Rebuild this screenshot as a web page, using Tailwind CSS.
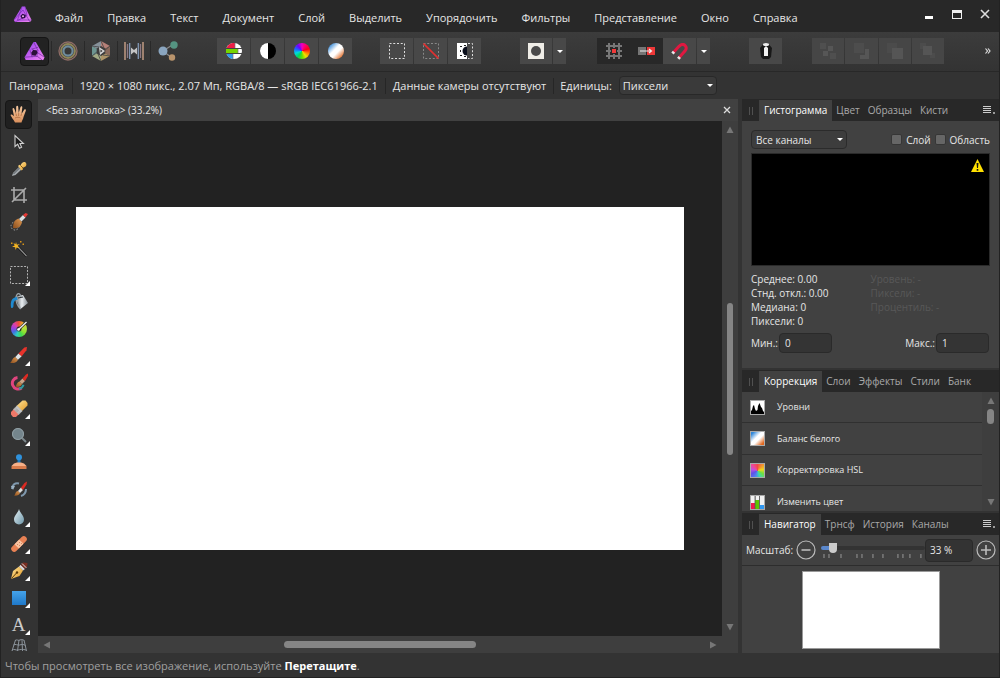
<!DOCTYPE html>
<html lang="ru">
<head>
    <meta charset="UTF-8">
    <meta name="viewport" content="width=device-width, initial-scale=1.0">
    <title>Без заголовка (33.2%)</title>
    <script src="https://cdn.jsdelivr.net/npm/@tailwindcss/browser@4"></script>
</head>
<body class="h-screen flex flex-col overflow-hidden border-x border-[#222] bg-[#333] text-[11px] leading-4 text-[#e6e6e6] font-['Open_Sans','Noto_Sans',sans-serif]">

    <!-- Shared gradients -->
    <svg class="absolute size-0" aria-hidden="true">
        <defs>
            <linearGradient id="purple" x1="0" y1="0" x2="1" y2="1"><stop offset="0" stop-color="#8a4ae8"/><stop offset=".5" stop-color="#c860f2"/><stop offset="1" stop-color="#f08af0"/></linearGradient>
            <linearGradient id="white-balance" x1="0" y1="0" x2="1" y2="1"><stop offset=".1" stop-color="#2f86d8"/><stop offset=".42" stop-color="#fff"/><stop offset=".58" stop-color="#fff"/><stop offset=".9" stop-color="#e0651c"/></linearGradient>
            <linearGradient id="wood" x1="1" y1="0" x2="0" y2="1"><stop offset="0" stop-color="#e09a52"/><stop offset="1" stop-color="#8a4d1d"/></linearGradient>
            <linearGradient id="steel" x1="0" y1="0" x2="1" y2="0"><stop offset="0" stop-color="#6e767c"/><stop offset=".5" stop-color="#e8edf0"/><stop offset="1" stop-color="#7f888f"/></linearGradient>
            <linearGradient id="drop" x1="0" y1="0" x2="1" y2="1"><stop offset="0" stop-color="#e6f1f6"/><stop offset="1" stop-color="#6d96a8"/></linearGradient>
            <linearGradient id="blue" x1="0" y1="0" x2="0" y2="1"><stop offset="0" stop-color="#45a3ea"/><stop offset="1" stop-color="#1f78c8"/></linearGradient>
            <linearGradient id="skin" x1="0" y1="0" x2="0" y2="1"><stop offset="0" stop-color="#f6c9a0"/><stop offset="1" stop-color="#d98f5c"/></linearGradient>
            <linearGradient id="gold" x1="0" y1="0" x2="1" y2="1"><stop offset="0" stop-color="#ffe49a"/><stop offset="1" stop-color="#e29a25"/></linearGradient>
        </defs>
    </svg>

    <!-- Menu bar -->
    <header class="flex h-8 shrink-0 items-start bg-[#282828] pl-3">
        <svg class="mt-1 size-5" viewBox="0 0 20 20" aria-hidden="true">
            <path d="M9 2.5h3L18.5 16 17 18H2L.8 16z" fill="url(#purple)"/>
            <path d="M9 2.5 4.5 16H18.5M12 2.5l2 9L2 18M1 15.8 10 6l7 12" fill="none" stroke="#6a25a8" stroke-width=".6"/>
            <path d="m9.6 9.7 3.2 1.4-.6 3-3.3.6-1.6-2.6z" fill="#2a0d45"/>
            <circle cx="10" cy="12.3" r="1" fill="#f3b5f5"/>
        </svg>
        <nav class="ml-[22px] flex gap-6 pt-[10px]">
            <a href="#">Файл</a>
            <a href="#">Правка</a>
            <a href="#">Текст</a>
            <a href="#">Документ</a>
            <a href="#">Слой</a>
            <a href="#">Выделить</a>
            <a href="#">Упорядочить</a>
            <a href="#">Фильтры</a>
            <a href="#">Представление</a>
            <a href="#">Окно</a>
            <a href="#">Справка</a>
        </nav>
        <div class="ml-auto flex gap-4 pt-2 pr-2">
            <button class="grid size-3 place-items-center" aria-label="Свернуть"><svg class="size-3" viewBox="0 0 12 12"><path d="M2 8h8v3H2z" fill="#fff"/></svg></button>
            <button class="grid size-3 place-items-center" aria-label="Развернуть"><svg class="size-3" viewBox="0 0 12 12"><path d="M1 2h10v9H1zM2 5v5h8V5z" fill="#f0f0f0" fill-rule="evenodd"/></svg></button>
            <button class="grid size-3 place-items-center" aria-label="Закрыть"><svg class="size-3" viewBox="0 0 12 12"><path d="m2 2 8 8M10 2l-8 8" stroke="#ddd" stroke-width="1.6"/></svg></button>
        </div>
    </header>

    <!-- Toolbar -->
    <div class="flex h-10 shrink-0 items-center border-b border-[#282828] bg-linear-to-b from-[#3c3c3c] to-[#333] pb-px pl-[19px]">
        <button class="grid size-[29px] place-items-center rounded-sm border border-[#151515] bg-[#222]" aria-label="Photo Persona">
            <svg class="size-[21px]" viewBox="0 0 22 22">
                <path d="M10 1h2.4L21.5 17l-1.3 3H1.8L.6 17z" fill="url(#purple)"/>
                <path d="M10 1 14.6 10M21.5 17 8 8.2M.6 17l13-1M6 8.7 8.5 17M14.8 6.6 8 8.5M13.8 16l5.4 4M14.6 9.5l-1.2 7" fill="none" stroke="#6d2a9e" stroke-width=".7"/>
                <path d="m9.5 9.500 3.800.300.800 2.900-2 2.800-3.800-.600-.700-2.700z" fill="#2b1038"/>
            </svg>
        </button>
        <div class="ml-[2px] flex divide-x divide-[#292929] border-l border-[#292929]">
            <button class="grid h-5 w-[33px] place-items-center" aria-label="Liquify Persona">
                <svg class="size-5" viewBox="0 0 20 20" fill="none"><circle cx="10" cy="10" r="9" stroke="#8f6c66" stroke-width="1.3"/><circle cx="10" cy="10" r="7" stroke="#8f8558" stroke-width="1.8"/><circle cx="10" cy="10" r="4.6" stroke="#6f8c9c" stroke-width="2.2"/></svg>
            </button>
            <button class="grid h-5 w-[33px] place-items-center" aria-label="Develop Persona">
                <svg class="size-5" viewBox="0 0 20 20"><path d="m10 0 9 5-9 5z" fill="#b58078"/><path d="M19 5v10l-9-5z" fill="#8a6a5c"/><path d="m19 15-9 5V10z" fill="#ad9468"/><path d="m10 20-9-5 9-5z" fill="#a2aa84"/><path d="M1 15V5l9 5z" fill="#6d9591"/><path d="m1 5 9-5v10z" fill="#86919a"/><path d="m10 0 3 7M19 5l-6 5M19 15l-7-1M10 20l-3-7M1 15l6-5M1 5l7 1" stroke="#444" stroke-width=".800"/><path d="m10 5 4.300 2.500v5L10 15l-4.300-2.500v-5z" fill="#3d3d3d"/><path d="m8 6 6 4-5 4z" fill="#d6d6d6"/><path d="m9.500 8.500 2 1.500-2 1.500z" fill="#333"/></svg>
            </button>
            <button class="grid h-5 w-[33px] place-items-center" aria-label="Tone Mapping Persona">
                <svg class="size-5" viewBox="0 0 20 20"><path d="M1 1v18M19 1v18" stroke="#b9957f" stroke-width="1.6"/><path d="M3.500 3v14M16.500 3v14" stroke="#8c7883" stroke-width="1.300"/><path d="M5.700 2v16M14.300 2v16" stroke="#8298b5" stroke-width="1.300"/><path d="m7 6.500 3 2.500 3-2.500v7L10 11l-3 2.500z" fill="#c4c4c4"/></svg>
            </button>
            <button class="grid h-5 w-[33px] place-items-center" aria-label="Export Persona">
                <svg class="size-5" viewBox="0 0 20 20"><path d="m5 10 10-6.500M5 10l9 7" stroke="#888" stroke-width="1.300"/><circle cx="5" cy="10" r="4.500" fill="#8aa5bf"/><circle cx="16" cy="4" r="3.700" fill="#559482"/><circle cx="14" cy="16.500" r="3.200" fill="#b9946c"/></svg>
            </button>
        </div>

        <!-- Auto adjustments -->
        <div class="ml-[33px] flex gap-px">
            <button class="grid h-[26px] w-[33px] place-items-center bg-[#484848]" aria-label="Автоуровни">
                <svg class="size-4" viewBox="0 0 16 16"><circle cx="8" cy="8" r="8" fill="#fff"/><path d="M1.100 4A8 8 0 0 1 9 0v5H.600z" fill="#ee1d45"/><path d="M0 6h12v4H0z" fill="#76d500"/><path d="M.600 11H7v5A8 8 0 0 1 .600 11z" fill="#2f9be8"/><path d="M0 5.500h16M0 10.500h16" stroke="#444" stroke-width="1"/><path d="M9 0v5M12 6v4M7 11v5" stroke="#777" stroke-width=".700"/></svg>
            </button>
            <button class="grid h-[26px] w-[33px] place-items-center bg-[#484848]" aria-label="Автоконтраст">
                <svg class="size-4" viewBox="0 0 16 16"><circle cx="8" cy="8" r="8" fill="#000"/><path d="M8 0a8 8 0 0 0 0 16z" fill="#fff"/></svg>
            </button>
            <button class="grid h-[26px] w-[33px] place-items-center bg-[#484848]" aria-label="Автоцвета">
                <span class="size-4 rounded-full bg-[conic-gradient(#f000c0,#ff0060,#ff0018,#ff7a00,#f0e000,#60e000,#00d860,#00d8e0,#2060ff,#7000ff,#f000c0)]"></span>
            </button>
            <button class="grid h-[26px] w-[33px] place-items-center bg-[#484848]" aria-label="Автобаланс белого">
                <svg class="size-4" viewBox="0 0 16 16"><circle cx="8" cy="8" r="8" fill="url(#white-balance)"/></svg>
            </button>
        </div>

        <!-- Selection -->
        <div class="ml-[28px] flex gap-px">
            <button class="grid h-[26px] w-[33px] place-items-center bg-[#484848]" aria-label="Выделить все">
                <svg class="size-4" viewBox="0 0 16 16"><path d="M.500.500h15v15H.500z" fill="none" stroke="#ddd" stroke-dasharray="2 1.750"/></svg>
            </button>
            <button class="grid h-[26px] w-[33px] place-items-center bg-[#484848]" aria-label="Отменить выделение">
                <svg class="size-4" viewBox="0 0 16 16"><path d="M.500.500h15v15H.500z" fill="none" stroke="#888" stroke-dasharray="2 1.750"/><path d="m.500.500 15 15" stroke="#e03030" stroke-width="1.600"/></svg>
            </button>
            <button class="grid h-[26px] w-[33px] place-items-center bg-[#484848]" aria-label="Инвертировать выделение">
                <svg class="size-4" viewBox="0 0 16 16"><path d="M0 0h10v16H0z" fill="#fff"/><path d="M10 3.500a4.500 4.500 0 0 0 0 9z" fill="#0b0f1c"/><path d="M3 3h2v1H3zm0 4h1v2H3zm0 5h2v1H3zm4-10h2v1H7zm0 11h2v1H7z" fill="#222"/><path d="M11 .500h4.500v15H11" fill="none" stroke="#ddd" stroke-dasharray="2 1.750"/></svg>
            </button>
        </div>

        <!-- Quick mask -->
        <div class="ml-[39px] flex gap-px">
            <button class="grid h-[26px] w-8 place-items-center bg-[#484848]" aria-label="Быстрая маска">
                <svg class="size-4" viewBox="0 0 16 16"><path d="M0 0h16v16H0z" fill="#efede7"/><circle cx="8" cy="8" r="5" fill="#4a4a4a"/></svg>
            </button>
            <button class="grid h-[26px] w-[13px] place-items-center bg-[#484848]" aria-label="Параметры маски">
                <svg class="h-[3px] w-[6px]" viewBox="0 0 6 3"><path d="M0 0h6L3 3z" fill="#fff"/></svg>
            </button>
        </div>

        <!-- Snapping -->
        <div class="ml-[31px] flex">
            <button class="grid h-[26px] w-[33px] place-items-center bg-[#282828]" aria-label="Сетка">
                <svg class="size-4" viewBox="0 0 16 16"><path d="M3 0v16M8 0v16M13 0v16M0 3h16M0 8h16M0 13h16" stroke="#777" stroke-width="2"/><path d="M5 5h6v6H5z" fill="#282828"/><path d="M6 6h4v4H6z" fill="#f03a3a"/></svg>
            </button>
            <button class="grid h-[26px] w-[33px] place-items-center bg-[#282828]" aria-label="Перемещение по пикселям">
                <svg class="h-4 w-[17px]" viewBox="0 0 17 16"><path d="M0 4h8v8H0z" fill="#757575"/><path d="M9 4h8v8H9z" fill="#ee3838"/><path d="M2 8h11M11 6l2.500 2-2.500 2" fill="none" stroke="#eee" stroke-width="1.200"/></svg>
            </button>
            <button class="grid h-[26px] w-[33px] place-items-center bg-[#484848]" aria-label="Прилипание">
                <svg class="size-[17px]" viewBox="0 0 18 18" fill="none"><path d="m2.500 10 6-6.500c2.700-2.500 5-2.300 6.400-.900 1.800 1.800 1.400 4-.200 6L8.500 15.500" stroke="#e01840" stroke-width="3.200"/><path d="m1.500 11.200 1.700-1.900M7.600 16.600l1.700-1.900" stroke="#e8e8e8" stroke-width="3.200"/></svg>
            </button>
            <button class="ml-px grid h-[26px] w-[13px] place-items-center bg-[#484848]" aria-label="Параметры прилипания">
                <svg class="h-[3px] w-[6px]" viewBox="0 0 6 3"><path d="M0 0h6L3 3z" fill="#fff"/></svg>
            </button>
        </div>

        <button class="ml-[39px] grid h-[26px] w-[33px] place-items-center bg-[#484848]" aria-label="Помощник">
            <svg class="size-4" viewBox="0 0 16 16"><path d="M2 5 5 1.500h6L14 5l-1 9-2 2H5l-2-2z" fill="#181818"/><ellipse cx="8" cy="1.500" rx="3" ry="1.500" fill="#eee"/><path d="m8 3 2 2v8H6V5z" fill="#f2f2f2"/></svg>
        </button>

        <!-- Arrange -->
        <div class="ml-[30px] flex gap-px">
            <button class="grid h-[26px] w-8 place-items-center bg-[#464646]" aria-label="На задний план" disabled>
                <svg class="size-4" viewBox="0 0 16 16"><path d="M0 0h6v6H0zM10 10h6v6h-6z" fill="#4f4f4f"/><path d="M8 3h5v5H8zM3 8h5v5H3z" fill="#565656"/></svg>
            </button>
            <button class="grid h-[26px] w-[33px] place-items-center bg-[#464646]" aria-label="Назад" disabled>
                <svg class="size-4" viewBox="0 0 16 16"><path d="M0 0h10v10H0z" fill="#4d4d4d"/><path d="M11 6h4v10H6v-4h5z" fill="#565656"/></svg>
            </button>
            <button class="grid h-[26px] w-8 place-items-center bg-[#464646]" aria-label="Вперед" disabled>
                <svg class="size-4" viewBox="0 0 16 16"><path d="M0 0h10v10H0z" fill="#4b4b4b"/><path d="M5 5h11v11H5z" fill="#555"/></svg>
            </button>
            <button class="grid h-[26px] w-8 place-items-center bg-[#464646]" aria-label="На передний план" disabled>
                <svg class="size-4" viewBox="0 0 16 16"><path d="M0 0h6v6H0zM10 10h5v5h-5z" fill="#4c4c4c"/><path d="M3 3h9v9H3z" fill="#555"/></svg>
            </button>
        </div>
        <button class="mr-2 ml-auto" aria-label="Еще">
            <svg class="h-[6px] w-[6px]" viewBox="0 0 6 6"><path d="m.500.500 2 2.500-2 2.500m2.500-5L5 3 3 5.500" fill="none" stroke="#ddd" stroke-width="1.200"/></svg>
        </button>
    </div>

    <!-- Context bar -->
    <div class="flex h-[27px] shrink-0 items-center divide-x divide-[#262626]">
        <span class="pr-2 pl-2">Панорама</span>
        <span class="px-[7px]">1920 × 1080 пикс., 2.07 Мп, RGBA/8 — sRGB IEC61966-2.1</span>
        <span class="px-[7px]">Данные камеры отсутствуют</span>
        <div class="flex items-center pl-[6px]">
            <label for="units">Единицы:</label>
            <div class="relative ml-[7px]">
                <select id="units" class="block h-[19px] w-[98px] appearance-none rounded-sm border border-[#282828] bg-[#3a3a3a] pl-[3px] leading-4">
                    <option>Пиксели</option>
                </select>
                <svg class="pointer-events-none absolute top-2 right-1 h-[3px] w-[6px]" viewBox="0 0 6 3"><path d="M0 0h6L3 3z" fill="#fff"/></svg>
            </div>
        </div>
    </div>

    <div class="flex min-h-0 flex-1">
        <!-- Tools -->
        <div class="flex w-[37px] shrink-0 flex-col overflow-hidden pt-px pr-[2px]">
            <div class="flex h-[402px] shrink-0 flex-col">
                <button class="mx-auto grid w-[27px] flex-1 place-items-center rounded-sm border border-[#161616] bg-[#202020]" aria-label="Панорама">
                    <svg class="h-[18px] w-[17px]" viewBox="0 0 17 18"><path d="M5 17.500C3.500 14.500 1.200 12 .500 10c.500-1 1.800-.600 3.500 1.200L2.500 4c.200-1.300 1.500-1.200 1.900 0L6 8.500 6.200 1.700C6.500.500 8 .500 8.200 1.700l.500 6.300L10.500 2c.600-1.200 1.900-.800 1.800.500L11.500 9l2.700-4.300c1-.900 2-.200 1.600 1L13.500 12c-.300 2-1.500 3.500-2 5.500z" fill="url(#skin)"/><path d="M6 8.500 6.500 11M8.700 8 8.600 11M11.500 9l-.600 2M5 13c2-1 4-1 5.500 0" fill="none" stroke="#a86438" stroke-width=".700"/></svg>
                </button>
                <button class="mx-auto grid w-[27px] flex-1 place-items-center" aria-label="Вид">
                    <svg class="size-4" viewBox="0 0 16 16"><path d="M4 1.500v11l2.700-2.300 1.800 4 2.100-1-1.700-3.700h3.500z" fill="#1c1c1c" stroke="#d0d0d0" stroke-width="1.100"/></svg>
                </button>
                <button class="mx-auto grid w-[27px] flex-1 place-items-center" aria-label="Пипетка">
                    <svg class="size-4" viewBox="0 0 16 16"><path d="m1 15 1-3 6-6 2.500 2.500-6 5.500z" fill="#a4a9ad"/><path d="m2.500 13 6-6" stroke="#4c5358"/><path d="M7 5 8.500 3.800l1 .700C10.500 2 12 .500 14 1c1.800.900 1.800 3.300.500 4.500l-3 1.500.600 1.200L10.500 9.500z" fill="url(#gold)"/><path d="m9.500 4.500 2.500 2.500" stroke="#8a5a10"/></svg>
                </button>
                <button class="mx-auto grid w-[27px] flex-1 place-items-center" aria-label="Обрезка">
                    <svg class="size-4" viewBox="0 0 16 16"><path d="M3 0v13h13M0 3h13v13M1 15 15 1" fill="none" stroke="#aaa" stroke-width="1.600"/></svg>
                </button>
                <button class="mx-auto grid w-[27px] flex-1 place-items-center" aria-label="Кисть выделения">
                    <svg class="h-[18px] w-[18px]" viewBox="0 0 18 18"><circle cx="5" cy="13" r="4" fill="none" stroke="#aaa" stroke-dasharray="1.500 1.500"/><path d="M3 15c0-4 1-8 5.500-9.500l3.500 3.500C11 14 7.500 16 3 15z" fill="url(#wood)"/><path d="m9 6 4-4 2.500 2.500-4 4z" fill="#d8dde0"/><path d="m13 2 2.500-2L18 1l-2.500 3.500z" fill="#e53935"/></svg>
                </button>
                <button class="mx-auto grid w-[27px] flex-1 place-items-center" aria-label="Волшебная палочка">
                    <svg class="size-4" viewBox="0 0 16 16"><path d="m6 5 9.500 10" stroke="#151515" stroke-width="2.600"/><path d="m6 5 9.500 10" stroke="#8d8d8d" stroke-width="1.200"/><path d="m5 1 .800 2.700 3-.700-2.300 2 2.200 2.200-3-.600L4.500 9l-.300-2.800L1 5.700l2.700-1.200L2.500 2l2 1.200z" fill="#f6b521"/><path d="M9 0h1.500v1.500H9zM11.500 2.500H13V4h-1.500zM0 1.500h1.500V3H0z" fill="#d99518"/></svg>
                </button>
                <button class="relative mx-auto grid w-[27px] flex-1 place-items-center" aria-label="Прямоугольное выделение">
                    <svg class="size-[18px]" viewBox="0 0 18 18"><path d="M.500.500h17v17H.500z" fill="none" stroke="#b4b4b4" stroke-dasharray="2 1.400"/></svg>
                    <svg class="absolute right-[2px] bottom-[3px] size-[5px]" viewBox="0 0 4 4"><path d="M4 0v4H0z" fill="#fff"/></svg>
                </button>
                <button class="mx-auto grid w-[27px] flex-1 place-items-center" aria-label="Заливка">
                    <svg class="size-[18px]" viewBox="0 0 18 18"><path d="m6 3.500 7-1.500 5 8-7.500 6z" fill="url(#steel)"/><path d="m6 3.500 4.500 12.500c-3-3-5-7-4.500-12.500zM6 4c1-4 4-5 5 0" fill="none" stroke="#98a1a7" stroke-width="1.200"/><path d="m8 5 5-1" stroke="#30363a" stroke-width="1.200"/><path d="M7 4C2 4.500 0 8 1 14.500c1.500 1.300 2.500 0 2.500-2C3.500 9 4.500 7 7.500 7z" fill="#1f8ad0"/></svg>
                </button>
                <button class="mx-auto grid w-[27px] flex-1 place-items-center" aria-label="Градиент">
                    <span class="grid size-4 place-items-center rounded-full bg-[conic-gradient(#f05030,#e8c030,#b8e040,#90e030,#40d850,#30d0c0,#4070e0,#a040e0,#e040a0,#f05030)]">
                        <svg class="size-4 overflow-visible" viewBox="0 0 16 16"><circle cx="8" cy="8" r="2.500" fill="#333"/><path d="m7.500 8.500 8-7.500" stroke="#222" stroke-width="2.500"/><path d="m7.500 8.500 8-7.500" stroke="#f0f0f0" stroke-width="1.400"/><circle cx="7.500" cy="8.500" r="1.300" fill="#fff"/></svg>
                    </span>
                </button>
                <button class="relative mx-auto grid w-[27px] flex-1 place-items-center" aria-label="Кисть">
                    <svg class="size-[17px]" viewBox="0 0 16 16"><path d="M0 15c2-.500 1.500-4.500 5-5.500L7.500 12c-1 3-4.500 3.500-7.500 3z" fill="url(#wood)"/><path d="M5 9.500 8 6l3 2.700-3.500 3.300z" fill="#dfe4e6"/><path d="M8 6 13.500.500 16 0l-.500 3L11 8.700z" fill="#e8332b"/></svg>
                    <svg class="absolute right-[2px] bottom-[3px] size-[5px]" viewBox="0 0 4 4"><path d="M4 0v4H0z" fill="#fff"/></svg>
                </button>
                <button class="mx-auto grid w-[27px] flex-1 place-items-center" aria-label="Замена цвета">
                    <svg class="size-[18px]" viewBox="0 0 18 18"><path d="M7.500 4.500a5.800 5.800 0 1 0 4 10.500" fill="none" stroke="#e0457e" stroke-width="3"/><path d="M9 15.700a5.500 5.500 0 0 0 4.500-4" fill="none" stroke="#2f9aa0" stroke-width="2"/><path d="M5 13.500c2-.500 1-4 4.500-5L12 11c-1 2.500-4 3.500-7 2.500z" fill="url(#wood)"/><path d="m9.500 8.500 3-3L15 8l-3 3z" fill="#c9a389"/><path d="M12.500 5.500 16 1.500l2-1V3l-3 5z" fill="#dc2a22"/></svg>
                </button>
                <button class="relative mx-auto grid w-[27px] flex-1 place-items-center" aria-label="Ластик">
                    <svg class="size-[18px]" viewBox="0 0 18 18"><path d="m6.500 6 6-5.500h3L17.500 3v2.500L12 11z" fill="url(#gold)"/><path d="m3 9.500 4-4 5.500 5.500-4 4z" fill="#c4c4c4"/><path d="m5 7.500 5.500 5.500M4 8.500 9.500 14" stroke="#6b6b6b" stroke-width=".800" stroke-dasharray="1 1"/><path d="m1 12 2.500-2.500 5 5L6 17H3l-2-2.500z" fill="#ee7868"/></svg>
                    <svg class="absolute right-[2px] bottom-[3px] size-[5px]" viewBox="0 0 4 4"><path d="M4 0v4H0z" fill="#fff"/></svg>
                </button>
                <button class="relative mx-auto grid w-[27px] flex-1 place-items-center" aria-label="Осветлитель">
                    <svg class="size-4" viewBox="0 0 16 16"><path d="m10 10 5 5" stroke="#7d888d" stroke-width="2"/><circle cx="7" cy="7" r="6" fill="#74858c"/><circle cx="7" cy="7" r="5.500" fill="none" stroke="#92a0a5"/></svg>
                    <svg class="absolute right-[2px] bottom-[3px] size-[5px]" viewBox="0 0 4 4"><path d="M4 0v4H0z" fill="#fff"/></svg>
                </button>
                <button class="mx-auto grid w-[27px] flex-1 place-items-center" aria-label="Клонирование">
                    <svg class="size-4" viewBox="0 0 16 16"><path d="M6.500 4h3v6h-3z" fill="#1b78bd"/><circle cx="8" cy="3.200" r="3" fill="#2f92dc"/><path d="m3 9.500 3-1h4l3 1 2.500 2.500H.500z" fill="#f7b088"/><path d="M.500 12h15v3H.500z" fill="#d87c4c"/></svg>
                </button>
                <button class="mx-auto grid w-[27px] flex-1 place-items-center" aria-label="Кисть истории">
                    <svg class="size-4" viewBox="0 0 16 16"><path d="M1 8C1 4 4 1.500 8 2.500M15 8c0 4-2 6-5 7" fill="none" stroke="#7f98ad" stroke-width="2"/><path d="M0 5h4L2 9z" fill="#9db3c4"/><path d="M3 14.500c1.500-.500 1-4 4-4.500l2 2c-1 2.500-3.500 3-6 2.500z" fill="url(#wood)"/><path d="m7 10 3-3.500L12 9l-3 3z" fill="#ddd"/><path d="M10 6.500 13.500 2 16 .500 15.500 3.500 12 9z" fill="#dc2a22"/></svg>
                </button>
            </div>
            <div class="mt-px flex flex-col">
                <button class="relative mx-auto grid h-[27px] w-[27px] place-items-center" aria-label="Размытие">
                    <svg class="size-4" viewBox="0 0 16 16"><path d="M8 0c1 4 5 6.500 5 10.500a5 5 0 0 1-10 0C3 6.500 7 4 8 0z" fill="url(#drop)"/></svg>
                    <svg class="absolute right-[2px] bottom-[3px] size-[5px]" viewBox="0 0 4 4"><path d="M4 0v4H0z" fill="#fff"/></svg>
                </button>
                <button class="relative mx-auto grid h-[27px] w-[27px] place-items-center" aria-label="Восстановление">
                    <svg class="size-4" viewBox="0 0 16 16"><path d="m3.200 12.800 9.600-9.600" stroke="#e88154" stroke-width="6" stroke-linecap="round"/><path d="m3.500 8.200 4.700-4.700 4.300 4.300-4.700 4.700z" fill="#f8c3a2"/><path d="M6 8h1v1H6zM8 6h1v1H8zM8 9h1v1H8zM10 7h1v1h-1z" fill="#d4855d"/></svg>
                    <svg class="absolute right-[2px] bottom-[3px] size-[5px]" viewBox="0 0 4 4"><path d="M4 0v4H0z" fill="#fff"/></svg>
                </button>
                <button class="relative mx-auto grid h-[27px] w-[27px] place-items-center" aria-label="Перо">
                    <svg class="size-[18px]" viewBox="0 0 18 18"><path d="M1 17 3 9l6-4.500 4 4L9.500 14z" fill="url(#gold)"/><path d="m1.500 16.500 5-5.500" stroke="#5a3b0b"/><circle cx="7" cy="10.500" r="1.200" fill="#5a3b0b"/><path d="m9 4.500 1.700-1.800L15 7l-2 1.500z" fill="#d9d9d9"/><path d="M10.700 2.700 13 .500 17.500 1 17 5l-2 2z" fill="#7a2f22"/><path d="m12 1.500 4.300 4.300" stroke="#ddd"/></svg>
                    <svg class="absolute right-[2px] bottom-[3px] size-[5px]" viewBox="0 0 4 4"><path d="M4 0v4H0z" fill="#fff"/></svg>
                </button>
                <button class="relative mx-auto grid h-[27px] w-[27px] place-items-center" aria-label="Прямоугольник">
                    <svg class="size-[14px]" viewBox="0 0 14 14"><path d="M0 0h14v14H0z" fill="url(#blue)"/></svg>
                    <svg class="absolute right-[2px] bottom-[3px] size-[5px]" viewBox="0 0 4 4"><path d="M4 0v4H0z" fill="#fff"/></svg>
                </button>
                <button class="relative mx-auto grid h-[27px] w-[27px] place-items-center font-['Liberation_Serif',serif] text-[19px] text-[#ccc]" aria-label="Художественный текст">
                    A
                    <svg class="absolute right-[2px] bottom-[3px] size-[5px]" viewBox="0 0 4 4"><path d="M4 0v4H0z" fill="#fff"/></svg>
                </button>
                <button class="mx-auto grid h-[27px] w-[27px] justify-items-center" aria-label="Сетка деформации">
                    <svg class="h-[14px] w-4" viewBox="0 0 16 14" fill="none" stroke="#8c949c"><path d="M4 2.500c2-1.500 3 .500 5-.500s3-.500 4 .500M2.500 7c2-1.500 4 .500 6 0s4-1 6 .500M1 12c2-1.500 4 .500 6 0s5-1 8 0M4.500 2 1 13M8 2 6.500 13M11 2l.500 11M13 2l2.500 11"/></svg>
                </button>
            </div>
        </div>

        <!-- Document -->
        <main class="flex min-w-0 flex-1 flex-col">
            <div class="flex h-[22px] shrink-0 items-center justify-between bg-[#414141] pr-[6px] pl-2 text-[10px] font-medium">
                <span>&lt;Без заголовка&gt; (33.2%)</span>
                <button class="grid size-[10px] place-items-center" aria-label="Закрыть документ"><svg class="size-2" viewBox="0 0 8 8"><path d="m1 1 6 6M7 1 1 7" stroke="#ddd" stroke-width="1.300"/></svg></button>
            </div>
            <div class="flex min-h-0 flex-1">
                <div class="grid flex-1 place-items-center bg-[#222]">
                    <div class="aspect-video w-[89%] bg-white"></div>
                </div>
                <div class="flex w-4 flex-col items-center justify-between bg-[#3e3e3e] py-1">
                    <svg class="h-[9px] w-2" viewBox="0 0 8 9"><path d="M4 1.500 7.500 8h-7z" fill="#777"/></svg>
                    <div class="h-[152px] w-[6px] rounded-full bg-[#858585]"></div>
                    <svg class="h-[9px] w-2" viewBox="0 0 8 9"><path d="M4 7.500 7.500 1h-7z" fill="#777"/></svg>
                </div>
            </div>
            <div class="flex h-[17px] shrink-0 items-center justify-between bg-[#3e3e3e] pr-5 pl-1">
                <svg class="h-2 w-[9px]" viewBox="0 0 9 8"><path d="M1.500 4 8 .500v7z" fill="#777"/></svg>
                <div class="h-[7px] w-48 rounded-full bg-[#858585]"></div>
                <svg class="h-2 w-[9px]" viewBox="0 0 9 8"><path d="M7.500 4 1 .500v7z" fill="#777"/></svg>
            </div>
        </main>

        <!-- Panels -->
        <aside class="ml-1 flex w-[257px] shrink-0 flex-col gap-[2px] bg-[#333] text-[10px] font-medium">
            <section class="bg-[#414141]">
                <div class="flex h-[22px] items-stretch bg-[#282828] text-[#a8a8a8]">
                    <svg class="mt-2 mr-[6px] ml-[7px] h-2 w-1" viewBox="0 0 4 8"><path d="M.500 0v8M3.500 0v8" stroke="#505050"/></svg>
                    <button class="mt-px bg-[#414141] px-[5px] pb-px text-white">Гистограмма</button>
                    <button class="px-1">Цвет</button>
                    <button class="px-1">Образцы</button>
                    <button class="px-1">Кисти</button>
                    <button class="mr-1 ml-auto" aria-label="Меню панели"><svg class="h-2 w-3" viewBox="0 0 12 8"><path d="M0 .500h8M0 2.500h8M0 4.500h8M0 6.500h8" stroke="#ccc"/><path d="M10 6h2v2h-2z" fill="#999"/></svg></button>
                </div>
                <div class="px-[9px] pt-[9px] pb-[15px]">
                    <div class="flex items-center">
                        <div class="relative">
                            <select class="block h-[19px] w-24 appearance-none rounded-sm border border-[#2b2b2b] bg-[#3d3d3d] pl-1 leading-4" aria-label="Канал">
                                <option>Все каналы</option>
                            </select>
                            <svg class="pointer-events-none absolute top-2 right-1 h-[3px] w-[6px]" viewBox="0 0 6 3"><path d="M0 0h6L3 3z" fill="#fff"/></svg>
                        </div>
                        <input id="layer" type="checkbox" class="ml-auto size-[11px] appearance-none rounded-[2px] border border-[#363636] bg-[#666]">
                        <label for="layer" class="ml-1">Слой</label>
                        <input id="area" type="checkbox" class="ml-1 size-[11px] appearance-none rounded-[2px] border border-[#363636] bg-[#666]">
                        <label for="area" class="ml-1">Область</label>
                    </div>
                    <div class="mt-1 flex h-[113px] justify-end border border-[#2a2a2a] bg-black p-[5px]">
                        <svg class="size-[13px]" viewBox="0 0 13 13"><path d="M6.500 0 13 13H0z" fill="#ffe000"/><path d="M5.500 4h2L7 9H6zM5.700 10h1.600v1.700H5.700z" fill="#111"/></svg>
                    </div>
                    <div class="mt-[6px] grid grid-cols-2 leading-[14px]">
                        <div>
                            <p>Среднее: 0.00</p>
                            <p>Стнд. откл.: 0.00</p>
                            <p>Медиана: 0</p>
                            <p>Пиксели: 0</p>
                        </div>
                        <div class="font-normal text-[#585858]">
                            <p>Уровень: -</p>
                            <p>Пиксели: -</p>
                            <p>Процентиль: -</p>
                        </div>
                    </div>
                    <div class="mt-[5px] mr-px flex items-center">
                        <label for="min">Мин.:</label>
                        <input id="min" type="text" value="0" class="ml-px h-5 w-[53px] rounded-sm border border-[#2a2a2a] bg-[#343434] px-[5px]">
                        <label for="max" class="ml-auto">Макс.:</label>
                        <input id="max" type="text" value="1" class="ml-px h-5 w-[53px] rounded-sm border border-[#2a2a2a] bg-[#343434] px-[5px]">
                    </div>
                </div>
            </section>

            <section class="bg-[#414141]">
                <div class="flex h-[22px] items-stretch bg-[#282828] text-[#a8a8a8]">
                    <svg class="mt-2 mr-[6px] ml-[7px] h-2 w-1" viewBox="0 0 4 8"><path d="M.500 0v8M3.500 0v8" stroke="#505050"/></svg>
                    <button class="mt-px bg-[#414141] px-[5px] pb-px text-white">Коррекция</button>
                    <button class="px-1">Слои</button>
                    <button class="px-1">Эффекты</button>
                    <button class="px-1">Стили</button>
                    <button class="px-1">Банк</button>
                </div>
                <div class="flex h-[119px] overflow-hidden text-[9px]">
                    <ul class="min-w-0 flex-1">
                        <li class="flex h-[31px] items-center border-b border-[#303030]">
                            <svg class="mr-3 ml-2 size-[15px]" viewBox="0 0 15 15"><path d="M0 0h15v15H0z" fill="#aaa"/><path d="M1 1h13v13H1z" fill="#fff"/><path d="M1 14v-3l1-1 1-4 1-1 1 4 1 2 1.500-1L8 6l1.500-3L11 7l1 1 1 3 1 1v2z" fill="#000"/></svg>
                            Уровни
                        </li>
                        <li class="flex h-8 items-center border-b border-[#303030]">
                            <svg class="mr-3 ml-2 size-[15px]" viewBox="0 0 15 15"><path d="M0 0h15v15H0z" fill="#aaa"/><path d="M1 1h13v13H1z" fill="url(#white-balance)"/></svg>
                            Баланс белого
                        </li>
                        <li class="flex h-[31px] items-center border-b border-[#303030]">
                            <span class="mr-3 ml-2 size-[15px] border border-[#aaa] bg-[conic-gradient(#f04848,#f09030,#f0d820,#70e040,#40d8b0,#5080f0,#6050e8,#c050e0,#f04890,#f04848)]"></span>
                            Корректировка HSL
                        </li>
                        <li class="flex h-8 items-center">
                            <svg class="mr-3 ml-2 size-[15px]" viewBox="0 0 15 15"><path d="M0 0h15v15H0z" fill="#aaa"/><path d="M1 1h4v7H1zM6 1h3v4H6zM10 1h4v9h-4z" fill="#f2f2f2"/><path d="M1 8h4v6H1z" fill="#f01850"/><path d="M5 5h4v9H5z" fill="#5cc800"/><path d="M10 10h4v4h-4z" fill="#3098f0"/><path d="M5 1v13M9.500 1v13" stroke="#555" stroke-width=".800"/></svg>
                            Изменить цвет
                        </li>
                    </ul>
                    <div class="flex w-[17px] flex-col items-center bg-[#3e3e3e] py-1">
                        <svg class="h-[9px] w-2" viewBox="0 0 8 9"><path d="M4 1.500 7.500 8h-7z" fill="#777"/></svg>
                        <div class="mt-1 h-[15px] w-[7px] rounded-full bg-[#858585]"></div>
                        <svg class="mt-auto h-[9px] w-2" viewBox="0 0 8 9"><path d="M4 7.500 7.500 1h-7z" fill="#777"/></svg>
                    </div>
                </div>
            </section>

            <section class="flex flex-1 flex-col bg-[#414141]">
                <div class="flex h-[22px] items-stretch bg-[#282828] text-[#a8a8a8]">
                    <svg class="mt-2 mr-[6px] ml-[7px] h-2 w-1" viewBox="0 0 4 8"><path d="M.500 0v8M3.500 0v8" stroke="#505050"/></svg>
                    <button class="mt-px bg-[#414141] px-[5px] pb-px text-white">Навигатор</button>
                    <button class="px-1">Трнсф</button>
                    <button class="px-1">История</button>
                    <button class="px-1">Каналы</button>
                    <button class="mr-1 ml-auto" aria-label="Меню панели"><svg class="h-2 w-3" viewBox="0 0 12 8"><path d="M0 .500h8M0 2.500h8M0 4.500h8M0 6.500h8" stroke="#ccc"/><path d="M10 6h2v2h-2z" fill="#999"/></svg></button>
                </div>
                <div class="flex h-[31px] items-center border-b border-[#2d2d2d] pr-[3px] pl-1">
                    <label for="zoom">Масштаб:</label>
                    <button class="ml-[3px]" aria-label="Уменьшить"><svg class="size-5" viewBox="0 0 20 20"><circle cx="10" cy="10" r="9" fill="none" stroke="#bbb" stroke-width="1.200"/><path d="M5.500 10h9" stroke="#bbb" stroke-width="1.600"/></svg></button>
                    <div class="ml-[5px] flex-1">
                        <input id="zoom" type="range" min="0" max="100" value="8" class="block h-3 w-full appearance-none bg-transparent [&::-webkit-slider-runnable-track]:h-1 [&::-webkit-slider-runnable-track]:rounded-full [&::-webkit-slider-runnable-track]:bg-[linear-gradient(90deg,#5a87cc_10px,#333_10px)] [&::-webkit-slider-thumb]:-mt-[3px] [&::-webkit-slider-thumb]:h-[10px] [&::-webkit-slider-thumb]:w-2 [&::-webkit-slider-thumb]:appearance-none [&::-webkit-slider-thumb]:rounded-b-full [&::-webkit-slider-thumb]:bg-[#ccc]">
                        <svg class="h-1 w-full" viewBox="0 0 104 4" preserveAspectRatio="none"><path d="M3 0v4M8 0v4M20 0v4M36 0v4M41 0v4M52 0v4M62 0v4M77 0v4M82 0v4M89 0v4M100 0v4" stroke="#999" stroke-width="1"/></svg>
                    </div>
                    <input type="text" value="33 %" aria-label="Масштаб в процентах" class="h-[23px] w-12 rounded-sm border border-[#2a2a2a] bg-[#333] px-1">
                    <button class="ml-[3px]" aria-label="Увеличить"><svg class="size-5" viewBox="0 0 20 20"><circle cx="10" cy="10" r="9" fill="none" stroke="#bbb" stroke-width="1.200"/><path d="M5 10h10M10 5v10" stroke="#bbb" stroke-width="1.600"/></svg></button>
                </div>
                <div class="grid flex-1 place-items-center">
                    <div class="h-[78px] w-[138px] border border-[#999] bg-white"></div>
                </div>
            </section>
        </aside>
    </div>

    <!-- Status bar -->
    <footer class="flex h-[25px] shrink-0 items-center border-b border-[#222] px-1 pt-px text-[#a0a0a0]">
        <p>Чтобы просмотреть все изображение, используйте <b class="text-white">Перетащите</b>.</p>
    </footer>
</body>
</html>
